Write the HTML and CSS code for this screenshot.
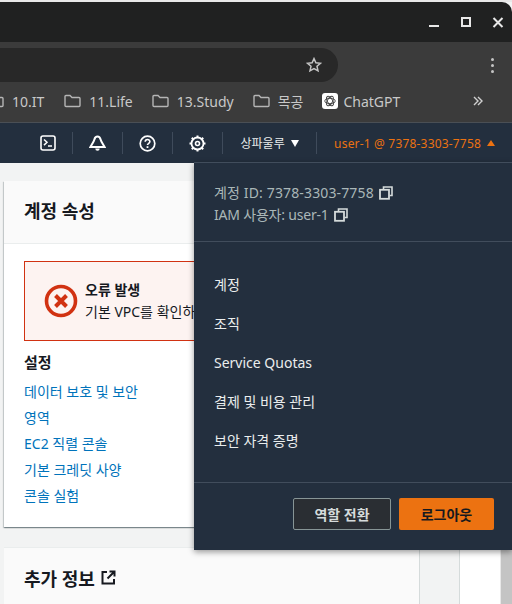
FILE: index.html
```html
<!DOCTYPE html>
<html lang="ko">
<head>
  <meta charset="UTF-8">
  <meta name="viewport" content="width=device-width, initial-scale=1.0">
  <title>계정 속성</title>
  <link rel="stylesheet" href="styles.css">
</head>
<body>

  <div class="top-strip"></div>

  <div class="titlebar">
    <svg class="win-icon" width="12" height="12" viewBox="0 0 12 12"><path d="M1 9h10" stroke="#e8e8e8" stroke-width="2"/></svg>
    <svg class="win-icon" width="12" height="12" viewBox="0 0 12 12"><rect x="2" y="1" width="8" height="8" fill="none" stroke="#e8e8e8" stroke-width="2"/></svg>
    <svg class="win-icon" width="12" height="12" viewBox="0 0 12 12"><path d="M1.500 1l9 9M10.500 1l-9 9" stroke="#e8e8e8" stroke-width="2"/></svg>
  </div>

  <div class="toolbar">
    <div class="url-pill">
      <svg width="16" height="16" viewBox="0 0 16 16"><path d="M8 1.600l1.900 4.200 4.500.5-3.400 3 1 4.500L8 11.500l-4 2.300 1-4.500-3.400-3 4.500-.5z" fill="none" stroke="#c4c4c4" stroke-width="1.500"/></svg>
    </div>
    <div class="kebab"><span></span><span></span><span></span></div>
  </div>

  <div class="bookmarks">
    <span class="bm bm-cut">
      <svg class="folder" width="17" height="14" viewBox="0 0 17 14"><path d="M1 2.500a1 1 0 0 1 1-1h4l2 2h7a1 1 0 0 1 1 1v7a1 1 0 0 1-1 1H2a1 1 0 0 1-1-1z" fill="none" stroke="#b5b5b5" stroke-width="1.400"/></svg>
      10.IT
    </span>
    <span class="bm">
      <svg class="folder" width="17" height="14" viewBox="0 0 17 14"><path d="M1 2.500a1 1 0 0 1 1-1h4l2 2h7a1 1 0 0 1 1 1v7a1 1 0 0 1-1 1H2a1 1 0 0 1-1-1z" fill="none" stroke="#b5b5b5" stroke-width="1.400"/></svg>
      11.Life
    </span>
    <span class="bm">
      <svg class="folder" width="17" height="14" viewBox="0 0 17 14"><path d="M1 2.500a1 1 0 0 1 1-1h4l2 2h7a1 1 0 0 1 1 1v7a1 1 0 0 1-1 1H2a1 1 0 0 1-1-1z" fill="none" stroke="#b5b5b5" stroke-width="1.400"/></svg>
      13.Study
    </span>
    <span class="bm">
      <svg class="folder" width="17" height="14" viewBox="0 0 17 14"><path d="M1 2.500a1 1 0 0 1 1-1h4l2 2h7a1 1 0 0 1 1 1v7a1 1 0 0 1-1 1H2a1 1 0 0 1-1-1z" fill="none" stroke="#b5b5b5" stroke-width="1.400"/></svg>
      목공
    </span>
    <span class="bm bm-gpt">
      <span class="gpt-icon">
        <svg width="12" height="12" viewBox="0 0 12 12"><g fill="none" stroke="#444" stroke-width="0.900"><ellipse cx="6" cy="6" rx="5.200" ry="2.600"/><ellipse cx="6" cy="6" rx="5.200" ry="2.600" transform="rotate(60 6 6)"/><ellipse cx="6" cy="6" rx="5.200" ry="2.600" transform="rotate(120 6 6)"/></g></svg>
      </span>
      ChatGPT
    </span>
    <svg class="bm-more" width="10" height="10" viewBox="0 0 10 10"><path d="M1 1l4 4-4 4M5 1l4 4-4 4" fill="none" stroke="#d0d0d0" stroke-width="1.400"/></svg>
  </div>

  <nav class="navbar">
    <span class="nav-item nav-icon">
      <svg width="16" height="16" viewBox="0 0 16 16"><rect x="1" y="1" width="14" height="14" rx="2" fill="none" stroke="#fff" stroke-width="1.600"/><path d="M4 4.500l3 2.800-3 2.800M8 11h4" fill="none" stroke="#fff" stroke-width="1.500"/></svg>
    </span>
    <span class="nav-item nav-icon">
      <svg width="17" height="17" viewBox="0 0 17 17"><path d="M8.500 1.500c1.800 0 2.700 1.200 3.100 3 .5 2.200 2.500 5 4 7.500H1.400c1.500-2.500 3.500-5.300 4-7.500.4-1.800 1.300-3 3.100-3z" fill="none" stroke="#fff" stroke-width="2"/><path d="M6.300 13.500a2.200 2.200 0 0 0 4.400 0z" fill="#fff"/></svg>
    </span>
    <span class="nav-item nav-icon">
      <svg width="17" height="17" viewBox="0 0 17 17"><circle cx="8.500" cy="8.500" r="7.300" fill="none" stroke="#fff" stroke-width="1.700"/><path d="M6.200 6.800c0-3 4.700-3 4.700-.2 0 1.700-2.400 1.700-2.400 3.500" fill="none" stroke="#fff" stroke-width="1.600"/><rect x="7.600" y="11.200" width="1.800" height="1.800" fill="#fff"/></svg>
    </span>
    <span class="nav-item nav-icon">
      <svg width="17" height="17" viewBox="0 0 17 17"><circle cx="8.500" cy="8.500" r="6" fill="none" stroke="#fff" stroke-width="1.800"/><circle cx="8.500" cy="8.500" r="2" fill="none" stroke="#fff" stroke-width="1.600"/><g stroke="#fff" stroke-width="2"><path d="M8.500 0.500v2M8.500 14.500v2M0.500 8.500h2M14.500 8.500h2M2.800 2.800l1.400 1.400M12.800 12.800l1.400 1.400M14.200 2.800l-1.400 1.400M4.200 12.800l-1.400 1.400"/></g></svg>
    </span>
    <span class="nav-item nav-region">상파울루 <i class="caret-down"></i></span>
    <span class="nav-item nav-user">user-1 @ 7378-3303-7758 <i class="caret-up"></i></span>
  </nav>

  <div class="page">
    <main class="content">
      <section class="card">
        <h2 class="card-head">계정 속성</h2>
        <div class="card-body">
          <div class="alert">
            <svg class="alert-icon" width="34" height="34" viewBox="0 0 34 34"><circle cx="17" cy="17" r="14.500" fill="none" stroke="#d13212" stroke-width="3.600"/><path d="M11.500 11.500l11 11M22.500 11.500l-11 11" stroke="#d13212" stroke-width="4"/></svg>
            <div class="alert-text">
              <div class="alert-title">오류 발생</div>
              <div class="alert-msg">기본 VPC를 확인하</div>
            </div>
          </div>
          <h3 class="settings-title">설정</h3>
          <ul class="settings-links">
            <li><a href="#">데이터 보호 및 보안</a></li>
            <li><a href="#">영역</a></li>
            <li><a href="#">EC2 직렬 콘솔</a></li>
            <li><a href="#">기본 크레딧 사양</a></li>
            <li><a href="#">콘솔 실험</a></li>
          </ul>
        </div>
      </section>
      <section class="card card-more">
        <h2 class="card-head">추가 정보
          <svg width="15" height="15" viewBox="0 0 15 15"><path d="M6 2H1.500v11.500H13V9M8.500 1.500h5v5M13.500 1.500L6.500 8.500" fill="none" stroke="#16191f" stroke-width="2"/></svg>
        </h2>
      </section>
    </main>
    <div class="side-rail"></div>
    <div class="side-white"></div>
    <div class="side-scroll"></div>
  </div>

  <div class="account-menu">
    <div class="menu-ids">
      <div class="menu-id menu-id-account">계정 ID: 7378-3303-7758
        <svg width="14" height="14" viewBox="0 0 14 14"><path d="M4.500 3V1h8.500v8.500h-2.500" fill="none" stroke="#d5dbdb" stroke-width="1.600"/><rect x="1" y="3.800" width="9" height="9" fill="none" stroke="#d5dbdb" stroke-width="1.800"/></svg>
      </div>
      <div class="menu-id menu-id-iam">IAM 사용자: user-1
        <svg width="14" height="14" viewBox="0 0 14 14"><path d="M4.500 3V1h8.500v8.500h-2.500" fill="none" stroke="#d5dbdb" stroke-width="1.600"/><rect x="1" y="3.800" width="9" height="9" fill="none" stroke="#d5dbdb" stroke-width="1.800"/></svg>
      </div>
    </div>
    <ul class="menu-links">
      <li>계정</li>
      <li>조직</li>
      <li>Service Quotas</li>
      <li>결제 및 비용 관리</li>
      <li>보안 자격 증명</li>
    </ul>
    <div class="menu-actions">
      <button class="btn-switch">역할 전환</button>
      <button class="btn-logout">로그아웃</button>
    </div>
  </div>

</body>
</html>
```

FILE: styles.css
```css
html, body {
  height: 100%;
}

body {
  margin: 0;
  height: 604px;
  overflow: hidden;
  position: relative;
  display: flex;
  flex-direction: column;
  font-family: "Noto Sans", "Noto Sans CJK KR", sans-serif;
  background-color: #f2f3f3;
}

.top-strip {
  height: 2px;
  background-color: #e8e8e8;
}

.titlebar {
  height: 40px;
  background-color: #202121;
  border-radius: 0 10px 0 0;
  display: flex;
  justify-content: flex-end;
  align-items: center;
  gap: 20px;
  padding-right: 8px;
}

.win-icon {
  margin-top: 1px;
}

.toolbar {
  height: 40px;
  background-color: #3b3b3b;
  display: flex;
  align-items: flex-start;
  justify-content: space-between;
  padding: 6px 18px 0 0;
  box-sizing: border-box;
}

.url-pill {
  width: 338px;
  height: 34px;
  background-color: #282828;
  border-radius: 0 17px 17px 0;
  display: flex;
  align-items: center;
  justify-content: flex-end;
  padding-right: 16px;
  box-sizing: border-box;
}

.kebab {
  display: flex;
  flex-direction: column;
  gap: 3px;
  padding-top: 10px;
}

.kebab span {
  width: 3px;
  height: 3px;
  border-radius: 50%;
  background-color: #c4c4c4;
}

.bookmarks {
  height: 41px;
  background-color: #3b3b3b;
  border-bottom: 1px solid #4a4f55;
  box-sizing: border-box;
  display: flex;
  align-items: center;
  padding: 0 0 2px 12px;
  font-size: 14px;
  color: #c8c8c8;
  overflow: hidden;
}

.bm {
  display: flex;
  align-items: center;
  gap: 8px;
  margin-right: 19px;
  white-space: nowrap;
}

.bm-cut {
  margin-left: -25px;
  margin-right: 20px;
}

.bm-gpt {
  gap: 5px;
}

.gpt-icon {
  width: 16px;
  height: 16px;
  background-color: #fff;
  border-radius: 3px;
  display: flex;
  align-items: center;
  justify-content: center;
}

.bm-more {
  margin-left: auto;
  margin-right: 29px;
}

.navbar {
  height: 40px;
  background-color: #232f3e;
  display: flex;
  align-items: center;
  justify-content: flex-end;
  color: #fff;
  font-size: 12px;
  padding-right: 17px;
}

.nav-item {
  height: 22px;
  display: flex;
  align-items: center;
  justify-content: center;
  border-left: 1px solid #3f4b5b;
}

.nav-icon {
  width: 49px;
}

.nav-icon:first-child {
  border-left: none;
}

.nav-region {
  width: 93px;
  gap: 6px;
  color: #eaeded;
}

.nav-user {
  padding-left: 17px;
  gap: 6px;
  color: #ec7211;
  letter-spacing: 0.18px;
}

.caret-down,
.caret-up {
  width: 0;
  height: 0;
  border-left: 4px solid transparent;
  border-right: 4px solid transparent;
}

.caret-down {
  border-top: 7px solid #fff;
}

.caret-up {
  border-bottom: 6px solid #ec7211;
}

.page {
  flex: 1;
  display: flex;
  min-height: 0;
  overflow: hidden;
}

.content {
  width: 415px;
  margin-left: 4px;
  padding-top: 18px;
  flex: none;
}

.card {
  background-color: #fff;
  box-shadow: 0 1px 1px 0 rgba(0, 28, 36, 0.3), 1px 1px 1px 0 rgba(0, 28, 36, 0.15), -1px 1px 1px 0 rgba(0, 28, 36, 0.15);
}

.card-head {
  margin: 0;
  height: 63px;
  background-color: #fafafa;
  border-bottom: 1px solid #eaeded;
  box-sizing: border-box;
  padding: 0 0 4px 20px;
  font-size: 18px;
  font-weight: 700;
  color: #16191f;
  display: flex;
  align-items: center;
  gap: 6px;
}

.card-body {
  padding: 17px 20px 20px;
  height: 283px;
  box-sizing: border-box;
}

.alert {
  height: 80px;
  width: 400px;
  box-sizing: border-box;
  border: 1px solid #d13212;
  background-color: #fdf3f1;
  display: flex;
  align-items: center;
  padding-left: 19px;
  gap: 7px;
  color: #16191f;
  font-size: 14px;
  white-space: nowrap;
}

.alert-title {
  font-weight: 700;
  line-height: 22px;
}

.alert-msg {
  line-height: 22px;
}

.settings-title {
  margin: 10px 0 0;
  font-size: 15px;
  font-weight: 700;
  line-height: 22px;
  color: #16191f;
}

.settings-links {
  list-style: none;
  margin: 6px 0 0;
  padding: 0;
  font-size: 14px;
  line-height: 26px;
}

.settings-links a {
  color: #0073bb;
  text-decoration: none;
}

.card-more {
  margin-top: 20px;
  height: 80px;
  box-shadow: none;
  background-color: #fafafa;
  border-top: 1px solid #eaeded;
}

.card-more .card-head {
  border-bottom: none;
}

.side-rail {
  width: 39px;
  flex: none;
  border-left: 1px solid #d5dbdb;
  border-right: 1px solid #d5dbdb;
}

.side-white {
  width: 40px;
  flex: none;
  background-color: #fff;
  border-right: 1px solid #e8e8e8;
}

.side-scroll {
  flex: 1;
  background-color: #c4c4c4;
}

.account-menu {
  position: absolute;
  left: 194px;
  top: 162px;
  width: 318px;
  height: 388px;
  box-sizing: border-box;
  background-color: #232f3e;
  border-top: 1px solid #414d5c;
  box-shadow: 0 2px 6px rgba(0, 0, 0, 0.4);
  display: flex;
  flex-direction: column;
  font-size: 14px;
}

.menu-ids {
  height: 79px;
  box-sizing: border-box;
  padding: 19px 20px 0;
  border-bottom: 1px solid #414d5c;
  color: #aab7b8;
  line-height: 22px;
}

.menu-id {
  display: flex;
  align-items: center;
  gap: 5px;
}

.menu-id-account {
  letter-spacing: 0.14px;
}

.menu-id-iam {
  letter-spacing: -0.2px;
}

.menu-links {
  list-style: none;
  margin: 0;
  padding: 23px 20px 0;
  height: 241px;
  box-sizing: border-box;
  border-bottom: 1px solid #414d5c;
  color: #eaeded;
  line-height: 39px;
}

.menu-actions {
  display: flex;
  justify-content: flex-end;
  gap: 8px;
  padding: 15px 18px 0 0;
}

.menu-actions button {
  height: 32px;
  border-radius: 2px;
  font-family: inherit;
  font-size: 14px;
  font-weight: 700;
  cursor: pointer;
}

.btn-switch {
  width: 98px;
  border: 1px solid #879596;
  background-color: #2a2e33;
  color: #d5dbdb;
}

.btn-logout {
  width: 95px;
  border: none;
  background-color: #ec7211;
  color: #16191f;
}
```
